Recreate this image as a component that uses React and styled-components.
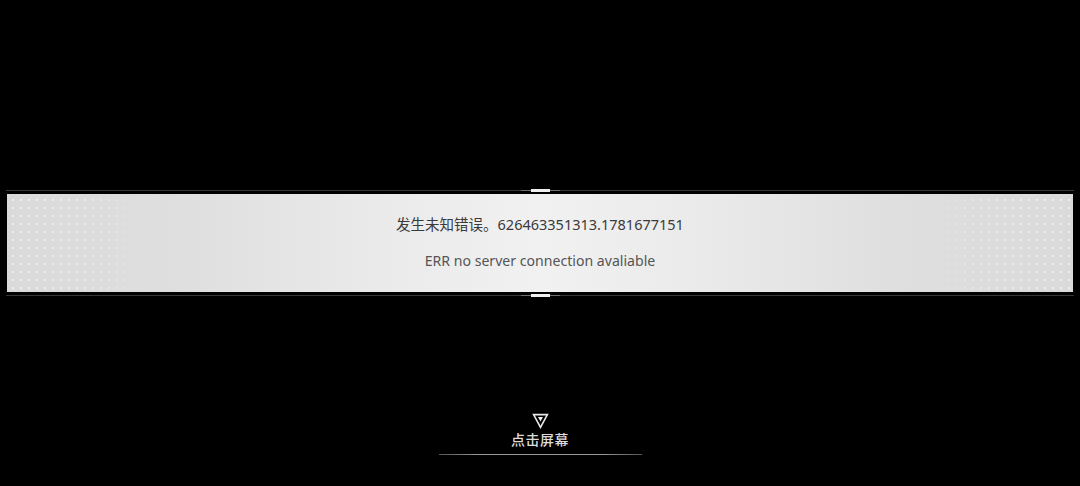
import React from "react";
import styled, { createGlobalStyle } from "styled-components";

const Global = createGlobalStyle`
  html, body { margin: 0; padding: 0; background: #000; }
  body { font-family: "Noto Sans", "Noto Sans CJK SC", sans-serif; }
`;

const Page = styled.div`
  width: 1080px;
  height: 486px;
  background: #000;
  display: flex;
  flex-direction: column;
  align-items: stretch;
  padding-top: 189px;
  box-sizing: border-box;
  overflow: hidden;
`;

const Band = styled.div`
  margin: 0 6px;
  display: flex;
  flex-direction: column;
  gap: 2px;
`;

const Rule = styled.div`
  position: relative;
  height: 3px;
  display: flex;
  align-items: center;
  justify-content: center;
  &::before {
    content: "";
    position: absolute;
    left: 0;
    right: 0;
    top: 1px;
    height: 1px;
    background: #363636;
  }
`;

const Notch = styled.div`
  position: relative;
  display: flex;
  align-items: center;
`;

const NotchSide = styled.div`
  width: 10px;
  height: 1px;
  background: #6e6e6e;
`;

const NotchCore = styled.div`
  width: 19px;
  height: 3px;
  background: #f0f0f0;
`;

const Panel = styled.div`
  position: relative;
  margin: 0 1px;
  height: 98px;
  box-sizing: border-box;
  background: linear-gradient(
    to right,
    #dadada 0%,
    #dedede 15%,
    #eaeaea 35%,
    #f1f1f1 50%,
    #eaeaea 65%,
    #dedede 85%,
    #dadada 100%
  );
  display: flex;
  flex-direction: column;
  align-items: center;
  padding-top: 19px;
  gap: 15px;
  &::before {
    content: "";
    position: absolute;
    inset: 0;
    background-image: radial-gradient(circle, rgba(255, 255, 255, 0.55) 0.8px, transparent 1.3px);
    background-size: 8px 8px;
    background-position: 2px 2px;
    -webkit-mask-image: linear-gradient(
      to right,
      #000 0%,
      rgba(0, 0, 0, 0.8) 7%,
      transparent 14%,
      transparent 86%,
      rgba(0, 0, 0, 0.8) 93%,
      #000 100%
    );
    mask-image: linear-gradient(
      to right,
      #000 0%,
      rgba(0, 0, 0, 0.8) 7%,
      transparent 14%,
      transparent 86%,
      rgba(0, 0, 0, 0.8) 93%,
      #000 100%
    );
    pointer-events: none;
  }
`;

const Message = styled.div`
  position: relative;
  font-size: ${(p) => p.$size};
  line-height: 22px;
  color: ${(p) => p.$color};
  white-space: nowrap;
`;

const Prompt = styled.div`
  margin-top: 116px;
  display: flex;
  flex-direction: column;
  align-items: center;
`;

const Tri = styled.svg`
  display: block;
  width: 17px;
  height: 16px;
`;

const PromptText = styled.div`
  margin-top: 2px;
  font-size: 14px;
  font-weight: 500;
  line-height: 18px;
  color: #dcdcdc;
  letter-spacing: 0.5px;
`;

const Underline = styled.div`
  margin-top: 5px;
  width: 203px;
  height: 1px;
  background: linear-gradient(to right, #555, #999 20%, #999 80%, #555);
`;

function RuleLine() {
  return (
    <Rule>
      <Notch>
        <NotchSide />
        <NotchCore />
        <NotchSide />
      </Notch>
    </Rule>
  );
}

export default function App() {
  return (
    <>
      <Global />
      <Page>
        <Band>
          <RuleLine />
          <Panel>
            <Message $color="#3a3a3a" $size="14.5px">发生未知错误。626463351313.1781677151</Message>
            <Message $color="#555555" $size="14.1px">ERR no server connection avaliable</Message>
          </Panel>
          <RuleLine />
        </Band>
        <Prompt>
          <Tri viewBox="0 0 17 16">
            <path d="M1.6 1.6 L15.4 1.6 L8.5 14.4 Z" fill="none" stroke="#e8e8e8" strokeWidth="1.6" strokeLinejoin="miter" />
            <path d="M6 4 L11 4 L8.5 8.6 Z" fill="#f4f4f4" />
          </Tri>
          <PromptText>点击屏幕</PromptText>
          <Underline />
        </Prompt>
      </Page>
    </>
  );
}
